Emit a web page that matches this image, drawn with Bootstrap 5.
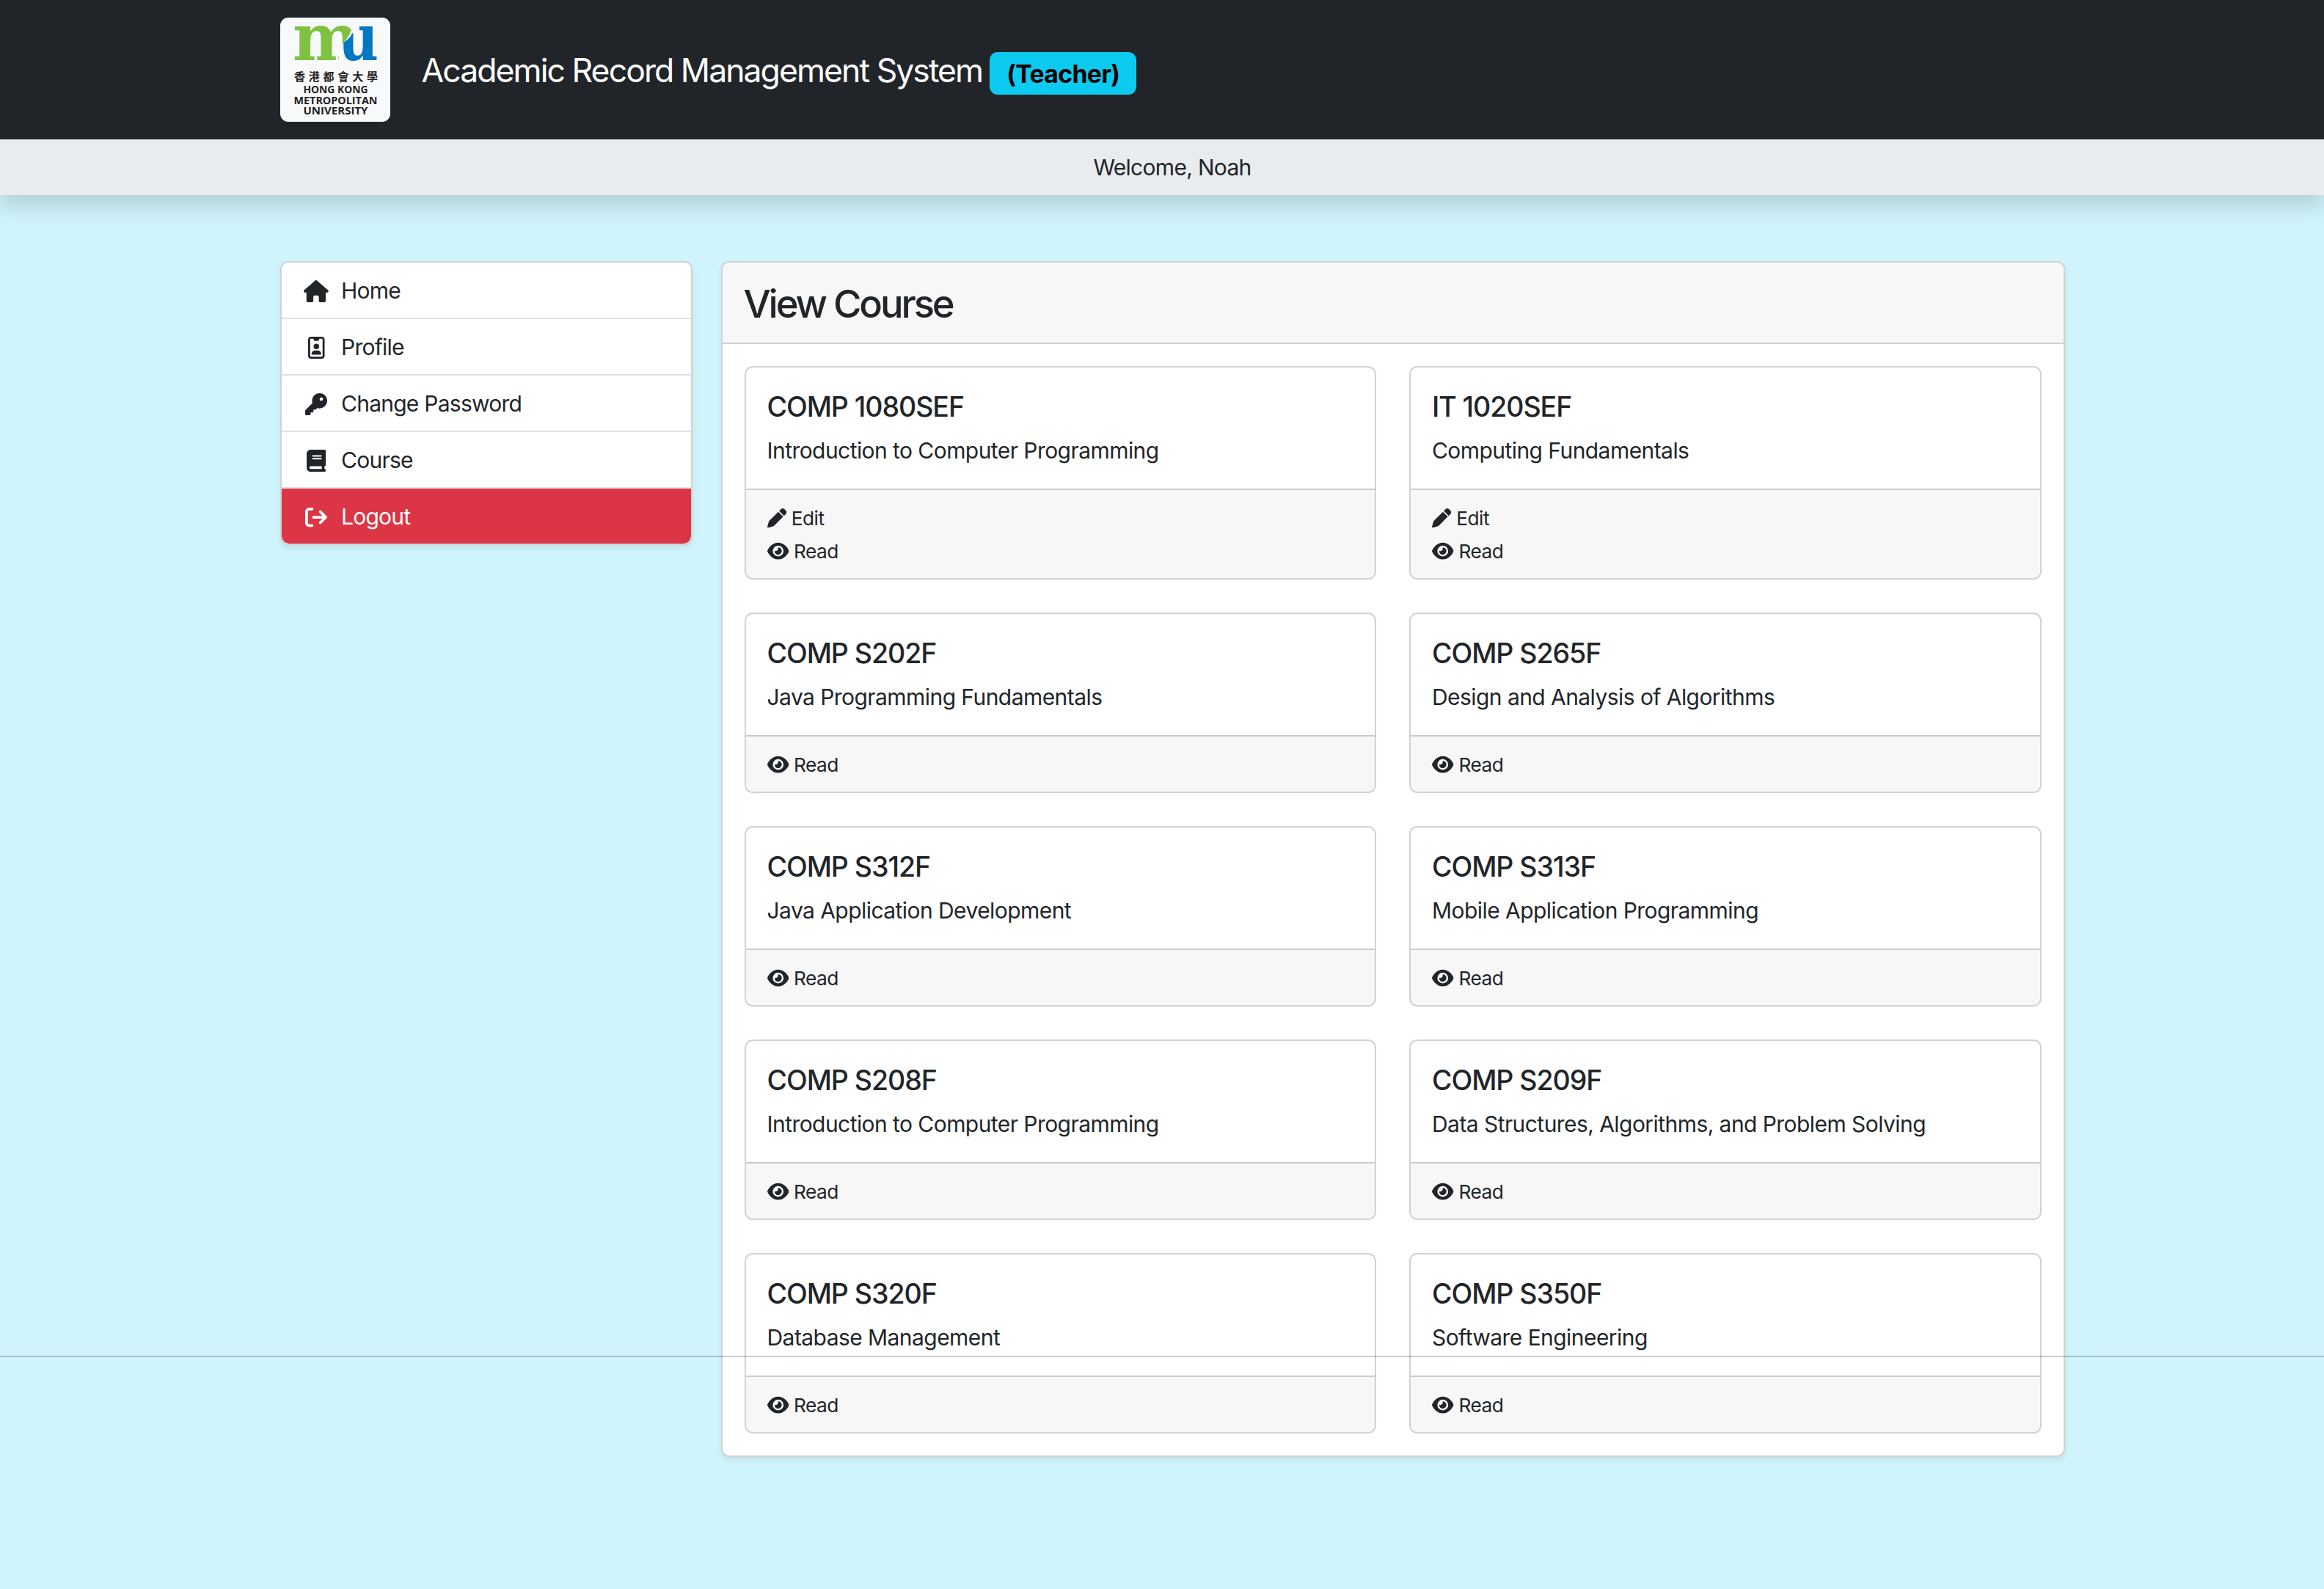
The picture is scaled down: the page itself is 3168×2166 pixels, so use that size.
<!DOCTYPE html>
<html lang="en">
<head>
<meta charset="utf-8">
<meta name="viewport" content="width=device-width, initial-scale=1">
<title>Academic Record Management System</title>
<link href="https://cdn.jsdelivr.net/npm/bootstrap@5.3.0/dist/css/bootstrap.min.css" rel="stylesheet">
<style>
html{font-size:30px}
body{font-family:Inter,"Liberation Sans",sans-serif;background:#cff4fc;min-height:2166px;position:relative;overflow-x:hidden}
.shift{padding-left:28px}
.page-wrap{width:2433px;margin:0 auto}
.site-head{height:190px}
.crest{width:150px;height:142px;background:#f8f9fa;border-radius:11px}
.site-title{font-size:44.5px;line-height:1.2;margin-left:43px;letter-spacing:-1.93px;padding-top:4px}
.role-tag{font-size:33.75px;padding:13px 23px 11px;border-radius:11px;color:#000;line-height:1;margin:10px 0 0 10px;height:58px;letter-spacing:-.65px}
.welcome{height:76px;background:#e9ecef;line-height:77px;box-shadow:0 15px 30px rgba(0,0,0,.15);letter-spacing:-.7px}
.content-area{padding-top:90px;gap:39px}
.side-col{width:562px}
.panel{border-width:2px;border-radius:11px;box-shadow:0 4px 8px rgba(0,0,0,.075)}
.side-col .panel{overflow:hidden}
.side-col .list-group-item{border-width:0 0 2px;padding:16px 30px 14px 29px;display:flex;align-items:center;letter-spacing:-.75px}
.side-col .list-group-item:last-child{border-bottom:0;background:#dc3545;color:#fff}
.ico-box{width:37.5px;margin-right:15px;display:flex;justify-content:center}
.ico-box svg{height:30px;fill:currentColor}
.panel-head{height:111px;background:#f7f7f7;border-bottom:2px solid #d0d0d0;padding:3px 29px 0;display:flex;align-items:center;border-radius:9px 9px 0 0}
.panel-head h3{font-size:52.5px;margin:0;font-weight:500;letter-spacing:-3.1px}
.course-grid{display:grid;grid-template-columns:1fr 1fr;gap:45px;padding:30px}
.course{border-width:2px;border-radius:11px}
.course .card-body{padding:31px 30px 29px 29px;flex:none}
.course h5{font-size:37.5px;line-height:45px;margin-bottom:15px;font-weight:500;letter-spacing:-1.05px}
.course p{margin:0;letter-spacing:-.56px}
.course .card-footer{padding:16px 29px 14px;border-top-width:2px;background:#f7f7f7;font-size:26.25px;letter-spacing:-.5px}
.act{display:flex;align-items:center;height:45px;gap:7px}
.act span{padding-top:1px}
.act svg{height:26.25px;fill:currentColor}
.fold-line{position:absolute;left:0;right:0;top:1848px;height:2px;background:rgba(0,0,0,.2)}
</style>
<script src="https://cdn.jsdelivr.net/npm/bootstrap@5.3.0/dist/js/bootstrap.bundle.min.js"></script>
</head>
<body>
<svg class="d-none">
<symbol id="eye" viewBox="0 0 576 512"><path d="M288 32c-80.800 0-145.500 36.800-192.600 80.600C48.600 156 17.300 208 2.500 243.700c-3.300 7.900-3.300 16.700 0 24.600C17.300 304 48.600 356 95.400 399.400C142.500 443.200 207.200 480 288 480s145.500-36.800 192.600-80.600c46.800-43.500 78.100-95.400 93-131.100c3.300-7.900 3.300-16.700 0-24.600c-14.900-35.700-46.200-87.700-93-131.100C433.500 68.800 368.800 32 288 32zM144 256a144 144 0 1 1 288 0 144 144 0 1 1 -288 0zm144-64c0 35.300-28.700 64-64 64c-7.100 0-13.900-1.200-20.300-3.300c-5.500-1.800-11.900 1.600-11.700 7.400c.3 6.900 1.300 13.800 3.200 20.700c13.700 51.200 66.400 81.600 117.600 67.900s81.600-66.400 67.900-117.600c-11.100-41.500-47.800-69.400-88.600-71.100c-5.800-.2-9.200 6.100-7.400 11.700c2.100 6.400 3.300 13.200 3.300 20.300z"/></symbol>
<symbol id="pen" viewBox="0 0 512 512"><path d="M362.700 19.300L314.300 67.700 444.300 197.700l48.400-48.400c25-25 25-65.500 0-90.500L453.300 19.300c-25-25-65.500-25-90.500 0zm-71 71L58.600 323.500c-10.400 10.400-18 23.300-22.200 37.400L1 481.200C-1.500 489.700 .8 498.800 7 505s15.300 8.500 23.700 6.100l120.300-35.400c14.100-4.200 27-11.800 37.400-22.200L421.700 220.300 291.700 90.300z"/></symbol>
</svg>

<header class="site-head bg-dark shift">
  <div class="page-wrap d-flex align-items-center h-100">
    <svg class="crest" viewBox="0 0 150 142" role="img">
      <clipPath id="cm"><path d="M0 0H97V17Q93 28 85 36L80 45V70H0z"/></clipPath>
      <clipPath id="cu"><path d="M97.500 22L104 18V0H150V70H78V46Q80 38 88 33Q96 27 97.500 22z"/></clipPath>
      <g font-family="DejaVu Serif" font-weight="700" font-size="87">
        <text x="17" y="58" fill="#7fc241" textLength="91" lengthAdjust="spacingAndGlyphs" clip-path="url(#cm)">m</text>
        <text x="79" y="58" fill="#0077c0" textLength="55" lengthAdjust="spacingAndGlyphs" clip-path="url(#cu)">u</text>
      </g>
      <g fill="#222">
        <text x="19" y="86" font-size="15" font-weight="700" font-family="Noto Sans CJK TC, sans-serif" textLength="114">香港都會大學</text>
        <g font-family="Open Sans, sans-serif" font-weight="700" font-size="14" text-anchor="middle">
          <text x="75.500" y="103.300" textLength="88" lengthAdjust="spacingAndGlyphs">HONG KONG</text>
          <text x="75.500" y="117.500" textLength="114" lengthAdjust="spacingAndGlyphs">METROPOLITAN</text>
          <text x="75.500" y="132" textLength="88" lengthAdjust="spacingAndGlyphs">UNIVERSITY</text>
        </g>
      </g>
    </svg>
    <span class="site-title text-white">Academic Record Management System</span>
    <span class="role-tag badge bg-info">(Teacher)</span>
  </div>
</header>
<div class="welcome shift text-center">Welcome, Noah</div>

<div class="shift">
<div class="page-wrap content-area d-flex align-items-start">
  <nav class="side-col">
    <div class="card panel">
      <div class="list-group list-group-flush">
        <a class="list-group-item"><span class="ico-box"><svg viewBox="0 0 576 512"><path d="M575.800 255.500c0 18-15 32.100-32 32.100h-32l.7 160.200c0 2.700-.2 5.400-.5 8.100V472c0 22.100-17.900 40-40 40H456c-1.100 0-2.200 0-3.300-.1c-1.400 .1-2.800 .1-4.200 .1H416 392c-22.100 0-40-17.900-40-40V448 384c0-17.700-14.300-32-32-32H256c-17.700 0-32 14.300-32 32v64 24c0 22.100-17.900 40-40 40H160 128.100c-1.500 0-3-.1-4.500-.2c-1.200 .1-2.400 .2-3.600 .2H104c-22.100 0-40-17.900-40-40V360c0-.9 0-1.900 .1-2.800V287.600H32c-18 0-32-14-32-32.100c0-9 3-17 10-24L266.400 8c7-7 15-8 22-8s15 2 21 7L564.800 231.500c8 7 12 15 11 24z"/></svg></span>Home</a>
        <a class="list-group-item"><span class="ico-box"><svg viewBox="0 0 384 512"><path d="M256 48V64c0 17.700-14.300 32-32 32H160c-17.700 0-32-14.300-32-32V48H64c-8.800 0-16 7.200-16 16V448c0 8.800 7.200 16 16 16H320c8.800 0 16-7.200 16-16V64c0-8.800-7.200-16-16-16H256zM0 64C0 28.700 28.700 0 64 0H320c35.300 0 64 28.700 64 64V448c0 35.300-28.700 64-64 64H64c-35.300 0-64-28.700-64-64V64zM160 320h64c44.200 0 80 35.800 80 80c0 8.800-7.200 16-16 16H96c-8.800 0-16-7.200-16-16c0-44.200 35.800-80 80-80zm-32-96a64 64 0 1 1 128 0 64 64 0 1 1 -128 0z"/></svg></span>Profile</a>
        <a class="list-group-item"><span class="ico-box"><svg viewBox="0 0 512 512"><path d="M336 352c97.200 0 176-78.800 176-176S433.200 0 336 0S160 78.800 160 176c0 18.700 2.900 36.800 8.300 53.700L7 391c-4.500 4.500-7 10.600-7 17v80c0 13.300 10.700 24 24 24h80c13.300 0 24-10.700 24-24V448h40c13.300 0 24-10.700 24-24V384h40c6.400 0 12.500-2.500 17-7l33.300-33.300c16.900 5.400 35 8.300 53.700 8.300zM376 96a40 40 0 1 1 0 80 40 40 0 1 1 0-80z"/></svg></span>Change Password</a>
        <a class="list-group-item"><span class="ico-box"><svg viewBox="0 0 448 512"><path d="M96 0C43 0 0 43 0 96V416c0 53 43 96 96 96H384h32c17.700 0 32-14.300 32-32s-14.300-32-32-32V384c17.700 0 32-14.300 32-32V32c0-17.700-14.300-32-32-32H384 96zm0 384H352v64H96c-17.700 0-32-14.300-32-32s14.300-32 32-32zm32-240c0-8.800 7.200-16 16-16H336c8.800 0 16 7.200 16 16s-7.200 16-16 16H144c-8.800 0-16-7.200-16-16zm16 48H336c8.800 0 16 7.200 16 16s-7.200 16-16 16H144c-8.800 0-16-7.200-16-16s7.200-16 16-16z"/></svg></span>Course</a>
        <a class="list-group-item"><span class="ico-box"><svg viewBox="0 0 512 512"><path d="M502.600 278.600c12.500-12.500 12.500-32.800 0-45.300l-128-128c-12.500-12.500-32.800-12.500-45.300 0s-12.500 32.800 0 45.300L402.700 224 192 224c-17.700 0-32 14.300-32 32s14.300 32 32 32l210.700 0-73.400 73.400c-12.500 12.500-12.500 32.800 0 45.300s32.800 12.500 45.300 0l128-128zM160 96c17.700 0 32-14.300 32-32s-14.300-32-32-32L96 32C43 32 0 75 0 128L0 384c0 53 43 96 96 96l64 0c17.700 0 32-14.300 32-32s-14.300-32-32-32l-64 0c-17.700 0-32-14.300-32-32l0-256c0-17.700 14.300-32 32-32l64 0z"/></svg></span>Logout</a>
      </div>
    </div>
  </nav>
  <main class="card panel flex-grow-1">
    <div class="panel-head"><h3>View Course</h3></div>
    <div class="course-grid">
      <div class="card course"><div class="card-body"><h5>COMP 1080SEF</h5><p>Introduction to Computer Programming</p></div><div class="card-footer"><div class="act"><svg viewBox="0 0 512 512"><use href="#pen"/></svg><span>Edit</span></div><div class="act"><svg viewBox="0 0 576 512"><use href="#eye"/></svg><span>Read</span></div></div></div>
      <div class="card course"><div class="card-body"><h5>IT 1020SEF</h5><p>Computing Fundamentals</p></div><div class="card-footer"><div class="act"><svg viewBox="0 0 512 512"><use href="#pen"/></svg><span>Edit</span></div><div class="act"><svg viewBox="0 0 576 512"><use href="#eye"/></svg><span>Read</span></div></div></div>
      <div class="card course"><div class="card-body"><h5>COMP S202F</h5><p>Java Programming Fundamentals</p></div><div class="card-footer"><div class="act"><svg viewBox="0 0 576 512"><use href="#eye"/></svg><span>Read</span></div></div></div>
      <div class="card course"><div class="card-body"><h5>COMP S265F</h5><p>Design and Analysis of Algorithms</p></div><div class="card-footer"><div class="act"><svg viewBox="0 0 576 512"><use href="#eye"/></svg><span>Read</span></div></div></div>
      <div class="card course"><div class="card-body"><h5>COMP S312F</h5><p>Java Application Development</p></div><div class="card-footer"><div class="act"><svg viewBox="0 0 576 512"><use href="#eye"/></svg><span>Read</span></div></div></div>
      <div class="card course"><div class="card-body"><h5>COMP S313F</h5><p>Mobile Application Programming</p></div><div class="card-footer"><div class="act"><svg viewBox="0 0 576 512"><use href="#eye"/></svg><span>Read</span></div></div></div>
      <div class="card course"><div class="card-body"><h5>COMP S208F</h5><p>Introduction to Computer Programming</p></div><div class="card-footer"><div class="act"><svg viewBox="0 0 576 512"><use href="#eye"/></svg><span>Read</span></div></div></div>
      <div class="card course"><div class="card-body"><h5>COMP S209F</h5><p>Data Structures, Algorithms, and Problem Solving</p></div><div class="card-footer"><div class="act"><svg viewBox="0 0 576 512"><use href="#eye"/></svg><span>Read</span></div></div></div>
      <div class="card course"><div class="card-body"><h5>COMP S320F</h5><p>Database Management</p></div><div class="card-footer"><div class="act"><svg viewBox="0 0 576 512"><use href="#eye"/></svg><span>Read</span></div></div></div>
      <div class="card course"><div class="card-body"><h5>COMP S350F</h5><p>Software Engineering</p></div><div class="card-footer"><div class="act"><svg viewBox="0 0 576 512"><use href="#eye"/></svg><span>Read</span></div></div></div>
    </div>
  </main>
</div>
</div>
<div class="fold-line"></div>
</body>
</html>
